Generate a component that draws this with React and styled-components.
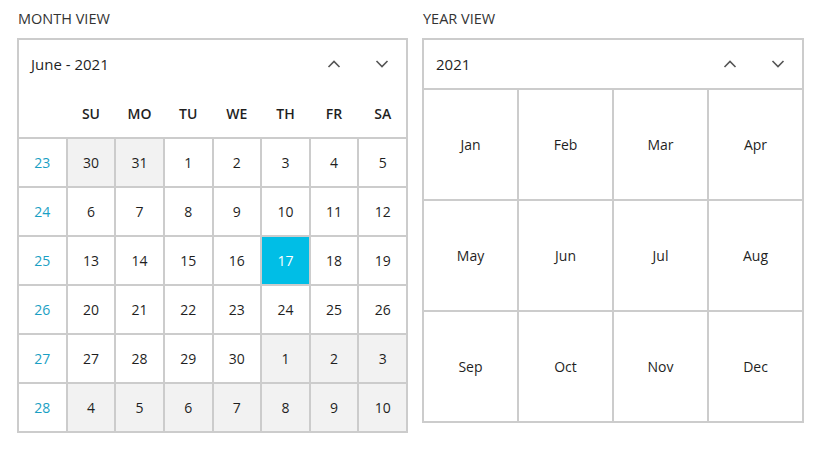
import React from 'react';
import styled, { createGlobalStyle } from 'styled-components';

const GlobalStyle = createGlobalStyle`
	html, body {
		margin: 0;
		padding: 0;
		background: #ffffff;
	}
	body {
		font-family: "Open Sans", "Noto Sans", "Liberation Sans", sans-serif;
		color: #1f1f1f;
	}
`;

const weekdays = ['SU', 'MO', 'TU', 'WE', 'TH', 'FR', 'SA'];

const weeks = [
	{ num: 23, days: [[30, 1], [31, 1], [1], [2], [3], [4], [5]] },
	{ num: 24, days: [[6], [7], [8], [9], [10], [11], [12]] },
	{ num: 25, days: [[13], [14], [15], [16], [17, 0, 1], [18], [19]] },
	{ num: 26, days: [[20], [21], [22], [23], [24], [25], [26]] },
	{ num: 27, days: [[27], [28], [29], [30], [1, 1], [2, 1], [3, 1]] },
	{ num: 28, days: [[4, 1], [5, 1], [6, 1], [7, 1], [8, 1], [9, 1], [10, 1]] },
];

const months = ['Jan', 'Feb', 'Mar', 'Apr', 'May', 'Jun', 'Jul', 'Aug', 'Sep', 'Oct', 'Nov', 'Dec'];

function Chevron({ up }) {
	return (
		<svg width="14" height="8" viewBox="0 0 14 8">
			<polyline
				points={up ? '1.5,7 7,1.5 12.5,7' : '1.5,1 7,6.5 12.5,1'}
				fill="none"
				stroke="#555"
				strokeWidth="1.6"
			/>
		</svg>
	);
}

function Header({ title }) {
	return (
		<HeaderBar>
			<HeaderTitle>{title}</HeaderTitle>
			<NavButton>
				<Chevron up />
			</NavButton>
			<NavButton>
				<Chevron />
			</NavButton>
		</HeaderBar>
	);
}

function App() {
	return (
		<>
			<GlobalStyle />
			<Page>
				<Panel width={391}>
					<Label>MONTH VIEW</Label>
					<Header title="June - 2021" />
					<WeekdayRow>
						<span />
						{weekdays.map((d) => (
							<Weekday key={d}>{d}</Weekday>
						))}
					</WeekdayRow>
					<DayGrid>
						{weeks.map((w) => (
							<React.Fragment key={w.num}>
								<WeekNum>{w.num}</WeekNum>
								{w.days.map(([n, other, selected], i) => (
									<Day key={i} $other={other} $selected={selected}>
										{n}
									</Day>
								))}
							</React.Fragment>
						))}
					</DayGrid>
				</Panel>
				<Panel width={382}>
					<Label>YEAR VIEW</Label>
					<Header title="2021" />
					<MonthGrid>
						{months.map((m) => (
							<MonthCell key={m}>{m}</MonthCell>
						))}
					</MonthGrid>
				</Panel>
			</Page>
		</>
	);
}

export default App;

const Page = styled.div`
	display: flex;
	gap: 14px;
	padding: 8px 0 0 17px;
`;

const Panel = styled.div`
	width: ${(p) => p.width}px;
	display: flex;
	flex-direction: column;
`;

const Label = styled.div`
	font-size: 14.5px;
	line-height: 22px;
	color: #333;
	padding-left: 1px;
	margin-bottom: 8px;
`;

const HeaderBar = styled.div`
	box-sizing: border-box;
	height: 50px;
	border: 2px solid #cccccc;
	border-bottom: none;
	display: flex;
	align-items: center;
`;

const HeaderTitle = styled.div`
	flex: 1;
	font-size: 15px;
	padding-left: 12px;
	color: #1f1f1f;
`;

const NavButton = styled.div`
	width: 48px;
	height: 48px;
	display: flex;
	align-items: center;
	justify-content: center;
`;

const WeekdayRow = styled.div`
	display: grid;
	grid-template-columns: repeat(8, 1fr);
	column-gap: 2px;
	height: 48px;
	padding-top: 1px;
	border: 2px solid #cccccc;
	border-top: none;
	background: #fff;
`;

const Weekday = styled.div`
	display: flex;
	align-items: center;
	justify-content: center;
	font-size: 14px;
	font-weight: 600;
	color: #1f1f1f;
`;

const DayGrid = styled.div`
	display: grid;
	grid-template-columns: repeat(8, 1fr);
	grid-auto-rows: 47px;
	gap: 2px;
	background: #cccccc;
	border: 2px solid #cccccc;
	border-top: none;
`;

const WeekNum = styled.div`
	background: #fff;
	display: flex;
	align-items: center;
	justify-content: center;
	font-size: 14px;
	color: #1a9fc4;
`;

const Day = styled.div`
	display: flex;
	align-items: center;
	justify-content: center;
	font-size: 14px;
	background: ${(p) => (p.$selected ? '#00bee6' : p.$other ? '#f2f2f2' : '#ffffff')};
	color: ${(p) => (p.$selected ? '#ffffff' : '#1f1f1f')};
`;

const MonthGrid = styled.div`
	display: grid;
	grid-template-columns: repeat(4, 1fr);
	grid-auto-rows: 109px;
	gap: 2px;
	background: #cccccc;
	border: 2px solid #cccccc;
`;

const MonthCell = styled.div`
	background: #fff;
	display: flex;
	align-items: center;
	justify-content: center;
	font-size: 14px;
	color: #1f1f1f;
`;
